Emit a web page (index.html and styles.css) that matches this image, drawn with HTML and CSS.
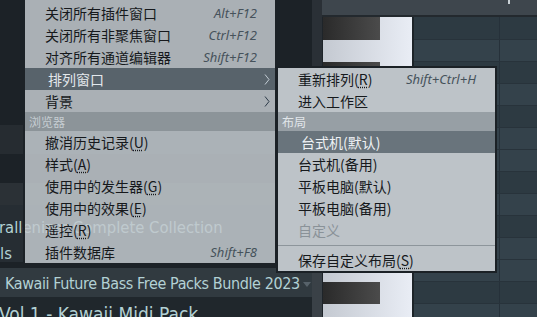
FILE: index.html
```html
<!DOCTYPE html>
<html lang="zh-CN">
<head>
<meta charset="utf-8">
<title>FL Menu</title>
<link rel="stylesheet" href="styles.css">
</head>
<body>
<div class="app">
  <div class="browser">
    <div class="b-gap b-gap-top"></div>
    <div class="b-item b-item-a"></div>
    <div class="b-gap b-gap-mid"></div>
    <div class="b-item b-item-b"></div>
    <div class="b-row b-row-plugin">rallenizer Complete Collection</div>
    <div class="b-row b-row-ls">ls</div>
    <div class="b-gap b-gap-low"></div>
    <div class="b-row b-row-pack">Kawaii Future Bass Free Packs Bundle 2023<span class="caret"></span></div>
    <div class="b-row b-row-vol">Vol 1 - Kawaii Midi Pack</div>
  </div>
  <div class="scroll"><div class="scroll-thumb"></div></div>
  <div class="editor">
    <div class="topbar"><span class="plus-stub"></span></div>
    <div class="roll">
      <div class="keys">
        <div class="key key-first"><span class="bk"></span></div>
        <div class="key"></div>
        <div class="key"><span class="bk"></span></div>
        <div class="key"></div>
        <div class="key"><span class="bk"></span></div>
        <div class="key"></div>
        <div class="key"></div>
        <div class="key"><span class="bk"></span></div>
        <div class="key"></div>
        <div class="key"><span class="bk"></span></div>
        <div class="key"></div>
        <div class="key"></div>
        <div class="key"><span class="bk"></span></div>
        <div class="key"></div>
      </div>
      <div class="divider"></div>
      <div class="grid">
        <div class="row row-black row-first"></div>
        <div class="row"></div>
        <div class="row row-black"></div>
        <div class="row"></div>
        <div class="row row-black"></div>
        <div class="row"></div>
        <div class="row"></div>
        <div class="row row-black"></div>
        <div class="row"></div>
        <div class="row row-black"></div>
        <div class="row"></div>
        <div class="row"></div>
        <div class="row row-black"></div>
        <div class="row"></div>
      </div>
    </div>
  </div>

  <div class="menu menu-main">
    <div class="mi"><span class="mi-label">关闭所有插件窗口</span><span class="mi-key">Alt+F12</span></div>
    <div class="mi"><span class="mi-label">关闭所有非聚焦窗口</span><span class="mi-key">Ctrl+F12</span></div>
    <div class="mi"><span class="mi-label">对齐所有通道编辑器</span><span class="mi-key">Shift+F12</span></div>
    <div class="mi mi-active mi-sub"><span class="mi-label">排列窗口</span><svg class="chev" viewBox="0 0 6 11"><path d="M1 0.5 L5 5.5 L1 10.5" fill="none" stroke="currentColor" stroke-width="1"/></svg></div>
    <div class="mi mi-sub"><span class="mi-label">背景</span><svg class="chev" viewBox="0 0 6 11"><path d="M1 0.5 L5 5.5 L1 10.5" fill="none" stroke="currentColor" stroke-width="1"/></svg></div>
    <div class="mh">浏览器</div>
    <div class="mi"><span class="mi-label">撤消历史记录(<span class="acc">U</span>)</span></div>
    <div class="mi"><span class="mi-label">样式(<span class="acc">A</span>)</span></div>
    <div class="mi"><span class="mi-label">使用中的发生器(<span class="acc">G</span>)</span></div>
    <div class="mi"><span class="mi-label">使用中的效果(<span class="acc">E</span>)</span></div>
    <div class="mi"><span class="mi-label">遥控(<span class="acc">R</span>)</span></div>
    <div class="mi"><span class="mi-label">插件数据库</span><span class="mi-key">Shift+F8</span></div>
  </div>

  <div class="menu menu-sub">
    <div class="mi"><span class="mi-label">重新排列(<span class="acc">R</span>)</span><span class="mi-key">Shift+Ctrl+H</span></div>
    <div class="mi"><span class="mi-label">进入工作区</span></div>
    <div class="mh">布局</div>
    <div class="mi mi-active"><span class="mi-label">台式机(默认)</span></div>
    <div class="mi"><span class="mi-label">台式机(备用)</span></div>
    <div class="mi"><span class="mi-label">平板电脑(默认)</span></div>
    <div class="mi"><span class="mi-label">平板电脑(备用)</span></div>
    <div class="mi mi-disabled"><span class="mi-label">自定义</span></div>
    <div class="msep"></div>
    <div class="mi"><span class="mi-label">保存自定义布局(<span class="acc">S</span>)</span></div>
  </div>
</div>
</body>
</html>
```

FILE: styles.css
```css
html, body {
  margin: 0;
  padding: 0;
}
body {
  width: 537px;
  height: 317px;
  overflow: hidden;
  background: #1c2227;
}
.app {
  position: relative;
  display: flex;
  width: 537px;
  height: 317px;
  overflow: hidden;
  font-family: "Noto Sans CJK SC", sans-serif;
}

/* browser panel */
.browser {
  width: 312px;
  flex: none;
  display: flex;
  flex-direction: column;
  font-family: "DejaVu Sans Condensed", "DejaVu Sans", sans-serif;
  font-size: 18px;
  color: #b3d1d4;
}
.b-gap, .b-item, .b-row { flex: none; }
.b-gap-top { height: 125px; }
.b-item-a { height: 29px; background: #262c31; }
.b-gap-mid { height: 29px; }
.b-item-b { height: 22px; background: #2b3136; }
.b-gap-low { height: 6px; }
.b-row {
  white-space: nowrap;
  overflow: hidden;
  line-height: 20px;
  box-sizing: border-box;
}
.b-row-plugin {
  height: 35px;
  padding-top: 13px;
  background: #262d33;
  text-indent: -1px;
  font-size: 16.5px;
}
.b-row-ls {
  height: 22px;
  padding-top: 4px;
  background: #262d33;
  font-size: 16.5px;
}
.b-row-pack {
  height: 29px;
  padding: 6px 0 0 5px;
  background: #313a40;
  font-size: 16px;
  letter-spacing: -0.4px;
}
.b-row-vol {
  height: 20px;
  padding-top: 7px;
  background: #20272c;
  text-indent: -1px;
  font-size: 19px;
}
.caret {
  display: inline-block;
  width: 0;
  height: 0;
  border-left: 4.5px solid transparent;
  border-right: 4.5px solid transparent;
  border-top: 5px solid #57626a;
  vertical-align: middle;
  margin-left: 3px;
}

.scroll {
  width: 10px;
  flex: none;
  background: #2a3036;
  display: flex;
  flex-direction: column;
  justify-content: flex-end;
}
.scroll-thumb { height: 50px; background: #3a4147; }

/* piano roll */
.editor {
  flex: 1;
  min-width: 0;
  display: flex;
  flex-direction: column;
}
.topbar {
  height: 15px;
  flex: none;
  border-bottom: 2px solid #23292e;
  background: #3e464d;
  display: flex;
  justify-content: flex-end;
}
.plus-stub {
  width: 2px;
  height: 4px;
  background: #c9d1d6;
  margin-right: 27px;
}
.roll {
  flex: 1;
  min-height: 0;
  display: flex;
  overflow: hidden;
}
.keys {
  width: 89px;
  flex: none;
  border-left: 1px solid #1e2429;
  display: flex;
  flex-direction: column;
}
.key {
  height: 22px;
  flex: none;
  background: linear-gradient(to right, #c4c9d1, #e9edf5);
}
.key-first { height: 23px; }
.bk {
  display: block;
  width: 57px;
  height: 100%;
  background: linear-gradient(to right, #2a2a2a, #4b4b4b);
}
.divider { width: 2px; flex: none; background: #1d2429; }
.grid {
  flex: 1;
  display: flex;
  flex-direction: column;
}
.row {
  height: 22px;
  flex: none;
  box-sizing: border-box;
  border-bottom: 1px solid #28333b;
  background: linear-gradient(to right, transparent 85px, #26313a 85px, #26313a 86px, transparent 86px), #34424b;
}
.row-black { background-color: #2d3a42; }
.row-first { height: 23px; }

/* menus */
.menu {
  position: absolute;
  box-sizing: border-box;
  font-size: 14px;
  color: #16191c;
}
.menu-main {
  left: 23px;
  top: 0;
  width: 254px;
  border: 2px solid #1c2227;
  border-top: 0;
  padding-top: 2px;
  background: rgba(193, 200, 205, 0.86);
}
.menu-sub {
  left: 276px;
  top: 66px;
  width: 221px;
  border: 2px solid #1b2126;
  background: #bdc3c8;
}
.mi {
  height: 22px;
  display: flex;
  align-items: center;
  white-space: nowrap;
}
.menu-main .mi { padding: 0 18px 0 20px; }
.menu-sub .mi { padding: 0 19px 0 20px; }
.menu-main .mi-sub { padding-right: 5px; }
.mi-label { flex: 1; }
.mi-key {
  font-family: "Noto Sans", sans-serif;
  font-style: italic;
  font-size: 13px;
  color: #46525b;
}
.chev { width: 6px; height: 11px; color: #2c3b48; }
.mi-active .chev { color: #c3ccd4; }
.mi-active .mi-label { padding-left: 3px; }
.menu-main .mi-active { background: #58636b; color: #e3e8ec; }
.menu-sub .mi-active { background: #69747c; color: #eef1f4; }
.mi-disabled { color: #8a9298; }
.mh {
  height: 19px;
  line-height: 19px;
  font-size: 12px;
  padding-left: 4px;
}
.menu-main .mh { background: #8c9499; color: #c6cdd2; }
.menu-sub .mh { background: #979fa5; color: #e1e6ea; }
.msep {
  height: 8px;
  display: flex;
  align-items: center;
}
.msep::before {
  content: "";
  flex: 1;
  height: 1px;
  background: #8d959b;
}
.acc {
  text-decoration: underline dotted;
  text-underline-offset: 2px;
}
```
